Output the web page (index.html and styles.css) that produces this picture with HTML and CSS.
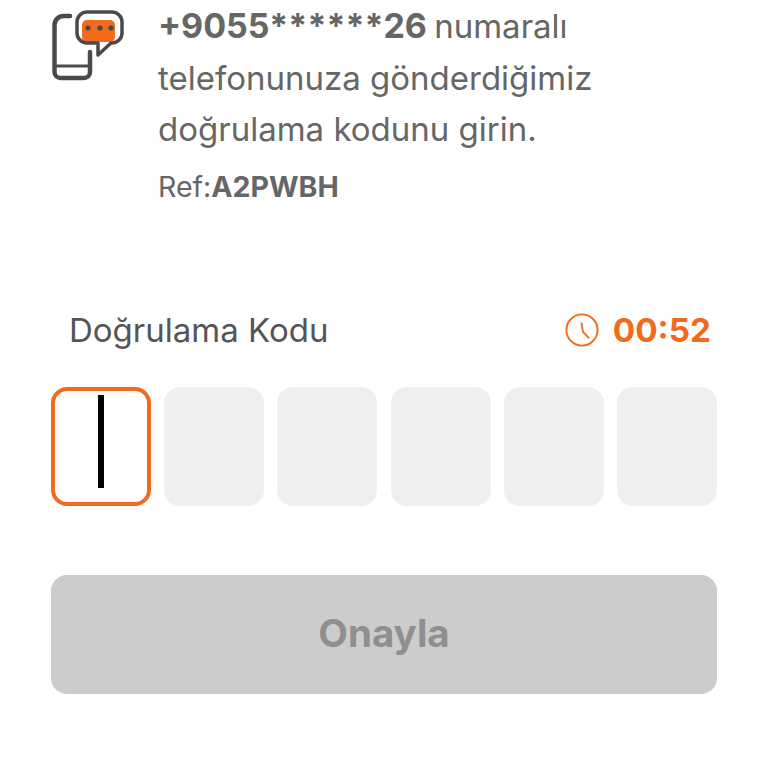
FILE: index.html
```html
<!DOCTYPE html>
<html lang="tr">
<head>
    <meta charset="UTF-8">
    <meta name="viewport" content="width=device-width, initial-scale=1.0">
    <title>Doğrulama Kodu</title>
    <link rel="stylesheet" href="styles.css">
</head>
<body>
    <div class="container">
        <div class="info">
            <svg class="info-icon" viewBox="0 0 75 72" fill="none">
                <path d="M19 6H12.5a9 9 0 0 0-9 9V62a6 6 0 0 0 6 6H33a6 6 0 0 0 6-6V42" stroke="#4a4a4a" stroke-width="4.5" stroke-linecap="round"/>
                <path d="M4 56H39" stroke="#4a4a4a" stroke-width="3"/>
                <rect x="31" y="10" width="33" height="22" rx="5" fill="#f26a1b"/>
                <path d="M36 2H61a10 10 0 0 1 10 10V23a10 10 0 0 1-10 10H60L47 45V33H36a10 10 0 0 1-10-10V12a10 10 0 0 1 10-10Z" stroke="#4a4a4a" stroke-width="3.5" stroke-linejoin="round"/>
                <circle cx="37" cy="18" r="2.6" fill="#4a4a4a"/>
                <circle cx="49" cy="18" r="2.6" fill="#4a4a4a"/>
                <circle cx="60" cy="18" r="2.6" fill="#4a4a4a"/>
            </svg>
            <div class="info-text">
                <p class="message"><b>+9055******26</b> numaralı telefonunuza gönderdiğimiz doğrulama kodunu girin.</p>
                <p class="ref">Ref:<b>A2PWBH</b></p>
            </div>
        </div>

        <div class="code-header">
            <span class="code-label">Doğrulama Kodu</span>
            <span class="timer">
                <svg class="timer-icon" viewBox="0 0 36 36" fill="none">
                    <circle cx="18" cy="18" r="16.5" stroke="#f26a1b" stroke-width="2"/>
                    <path d="M17.5 11L19 20L25 26" stroke="#f26a1b" stroke-width="2" stroke-linecap="round" stroke-linejoin="round"/>
                </svg>
                00:52
            </span>
        </div>

        <div class="code-boxes">
            <div class="code-box active"><span class="caret"></span></div>
            <div class="code-box"></div>
            <div class="code-box"></div>
            <div class="code-box"></div>
            <div class="code-box"></div>
            <div class="code-box"></div>
        </div>

        <button class="submit" disabled>Onayla</button>
    </div>
</body>
</html>
```

FILE: styles.css
```css
* {
    margin: 0;
    padding: 0;
    box-sizing: border-box;
}

body {
    font-family: Inter, "Noto Sans", sans-serif;
    background-color: white;
    color: #666;
    overflow: hidden;
}

.container {
    padding: 0 51px;
}

.info {
    display: flex;
    align-items: flex-start;
    gap: 32px;
}

.info-icon {
    width: 75px;
    height: 72px;
    margin-top: 10px;
    flex-shrink: 0;
}

.info-text {
    width: 490px;
}

.message {
    font-size: 33px;
    line-height: 51.5px;
}

.message b {
    font-size: 34px;
    margin-right: -2px;
}

.ref {
    font-size: 28.5px;
    line-height: 40px;
    margin-top: 11.5px;
}

.code-header {
    display: flex;
    justify-content: space-between;
    align-items: center;
    margin-top: 99px;
    padding: 0 6px 0 18px;
    height: 48px;
}

.code-label {
    font-size: 33px;
    color: #555;
}

.timer {
    display: flex;
    align-items: center;
    gap: 14px;
    font-size: 33.3px;
    font-weight: 700;
    color: #f26a1b;
}

.timer-icon {
    width: 34px;
    height: 34px;
}

.code-boxes {
    display: flex;
    justify-content: space-between;
    margin-top: 33px;
}

.code-box {
    width: 100px;
    height: 119px;
    background: #efefef;
    border-radius: 16px;
    display: flex;
    align-items: center;
    justify-content: center;
}

.code-box.active {
    background: white;
    border: 4px solid #f26a1b;
}

.caret {
    width: 6px;
    height: 93px;
    margin-bottom: 11px;
    background: black;
}

.submit {
    display: block;
    width: 100%;
    height: 119px;
    margin-top: 69px;
    padding-bottom: 4px;
    border: none;
    border-radius: 16px;
    background: #cccccc;
    color: #8f8f8f;
    font-family: inherit;
    font-size: 38.5px;
    font-weight: 700;
}
```
